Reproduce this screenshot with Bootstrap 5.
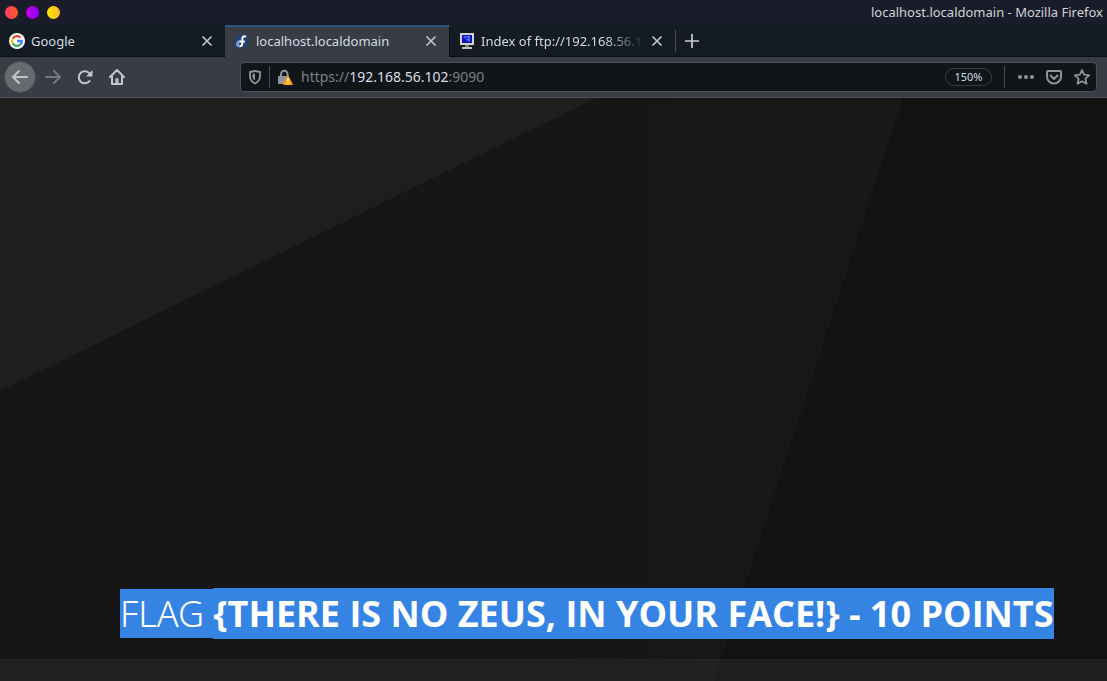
<!DOCTYPE html>
<html lang="en">
<head>
<meta charset="utf-8">
<meta name="viewport" content="width=device-width, initial-scale=1">
<title>localhost.localdomain - Mozilla Firefox</title>
<link href="https://cdn.jsdelivr.net/npm/bootstrap@5.3.0/dist/css/bootstrap.min.css" rel="stylesheet">
<style>
body{font-family:"Noto Sans",sans-serif;font-size:13px;line-height:20px;background:#171717;color:#d3dae3}
svg{display:block;flex:none}
button{background:none;border:0;padding:0;color:inherit}
.titlebar{height:24px;background:#1a1d29;color:#d0d3d9;padding:0 4px 0 5px}
.win-btn{width:13px;height:13px;border-radius:50%}
.win-close{background:linear-gradient(90deg,#ff4065,#ff5722)}
.win-min{background:linear-gradient(90deg,#cc00dd,#8800ff)}
.win-max{background:linear-gradient(90deg,#ffea00,#ffb62b)}
.tabstrip{height:33px;background:#141b22;border-bottom:1px solid #0b0f14;padding-top:1px}
.tab-item{flex:0 0 225px;min-width:0;gap:6px;padding:0 12px 0 9px;height:32px}
.tab-item.current{background:#383c44;border-top:2px solid #2c5582;border-right:1px solid #0b0f14;padding-bottom:2px}
.tab-item a{color:inherit;text-decoration:none;white-space:nowrap;overflow:hidden;min-width:0}
.fade-end{-webkit-mask-image:linear-gradient(90deg,#000 75%,transparent);mask-image:linear-gradient(90deg,#000 75%,transparent)}
.tool-row{height:41px;background:#383c44;border-bottom:1px solid #4b5058;padding:0 10px 1px 4px;color:#c0c6d0}
.back-btn{width:32px;height:32px;border-radius:50%;background:#686b6e;border:1px solid #4a4d51}
.history-tools{margin-left:-7px}
.urlbar{height:30px;background:#101518;border:1px solid #4b5058;border-radius:4px;color:#90949a;font-size:14px;padding:0 5px 0 7px;margin-left:115px;min-width:0}
.site-info{gap:7px}
.page-tools{gap:10px}
.vline{width:1px;height:22px;background:#484d53}
.url-field{position:relative;min-width:0}
.url-field input{width:100%;background:none;border:0;outline:0;padding:0;color:transparent}
.url-face{position:absolute;inset:0;pointer-events:none;color:#7c8188;white-space:nowrap}
.url-face b{font-weight:400;color:#d8dde5}
.zoom-pill{border:1px solid #383d43;border-radius:10px;width:47px;height:18px;font-size:11px;line-height:16px;color:#d3dae3}
.viewport-area{position:relative;overflow:hidden}
.backdrop{position:absolute;inset:0;width:100%;height:100%}
.flag-line{position:relative;margin:0 0 20px 120px;font-family:"Open Sans",sans-serif;font-size:36px;line-height:51px;color:#fff;white-space:nowrap}
.flag-line span,.flag-line strong{background:#3584e4}
.flag-line span{font-family:"Noto Sans",sans-serif;font-weight:300}
.flag-line strong{font-weight:700;padding:1px 0}
.foot-strip{position:relative;height:22px;background:rgba(255,255,255,.05)}
</style>
</head>
<body class="d-flex flex-column vh-100">
<header>
  <div class="titlebar d-flex align-items-center justify-content-between">
    <div class="d-flex gap-2">
      <button class="win-btn win-close" aria-label="Close"></button>
      <button class="win-btn win-min" aria-label="Minimize"></button>
      <button class="win-btn win-max" aria-label="Maximize"></button>
    </div>
    <span>localhost.localdomain - Mozilla Firefox</span>
  </div>

  <nav class="tabstrip d-flex" aria-label="Tabs">
    <div class="tab-item d-flex align-items-center">
      <svg width="16" height="16" viewBox="0 0 16 16"><circle cx="8" cy="8" r="8" fill="#fff"/><g fill="none" stroke-width="2.3"><path d="M11.6 4.6A4.9 4.9 0 0 0 3.8 5.5" stroke="#ea4335"/><path d="M3.8 5.5a4.9 4.9 0 0 0 0 5" stroke="#fbbc05"/><path d="M3.8 10.5a4.9 4.9 0 0 0 7.4 1.2" stroke="#34a853"/><path d="M11.2 11.7A4.7 4.7 0 0 0 12.8 8H8" stroke="#4285f4"/></g></svg>
      <a href="#" class="flex-grow-1">Google</a>
      <button aria-label="Close tab"><svg width="12" height="12" viewBox="0 0 12 12" fill="none" stroke="#c0c5cc" stroke-width="1.7"><path d="M1.5 1.5l9 9m0-9l-9 9"/></svg></button>
    </div>
    <div class="tab-item current d-flex align-items-center">
      <svg width="16" height="16" viewBox="0 0 16 16"><path d="M8 1a7 7 0 1 1 0 14H1V8a7 7 0 0 1 7-7z" fill="#294172"/><path d="M12 3.8C9.8 2.500 8.300 3.900 8.300 6v4.200c0 2.100-1.100 3-2.400 3-1.500 0-2.400-1-2.400-2.300 0-1.400 1.100-2.400 2.600-2.400h4.700" fill="none" stroke="#fff" stroke-width="1.900"/><path d="M5.600 8.500c-1.400.2-2.100 1.200-2.100 2.400 0 1.300.9 2.300 2.400 2.300" fill="none" stroke="#75a1d8" stroke-width="1.900"/></svg>
      <a href="#" class="flex-grow-1">localhost.localdomain</a>
      <button aria-label="Close tab"><svg width="12" height="12" viewBox="0 0 12 12" fill="none" stroke="#c0c5cc" stroke-width="1.7"><path d="M1.5 1.5l9 9m0-9l-9 9"/></svg></button>
    </div>
    <div class="tab-item d-flex align-items-center">
      <svg width="16" height="16" viewBox="0 0 16 16"><path d="M1 0h14v12H1z" fill="#d5d2c8"/><path d="M3 2h10v8H3z" fill="#0b15c8"/><path d="M4 3h7v6C8 8 6 6 4 3z" fill="#5670e8"/><path d="M6 3l4 3H7z" fill="#1020d8"/><path d="M6 12h4v2H6z" fill="#777a75"/><path d="M3 14h10v2H3z" fill="#c3c1b7"/></svg>
      <a href="#" class="flex-grow-1 fade-end">Index of ftp://192.168.56.102/</a>
      <button aria-label="Close tab"><svg width="12" height="12" viewBox="0 0 12 12" fill="none" stroke="#c0c5cc" stroke-width="1.7"><path d="M1.5 1.5l9 9m0-9l-9 9"/></svg></button>
    </div>
    <div class="d-flex align-items-center gap-2">
      <span class="vline"></span>
      <button aria-label="New tab"><svg width="16" height="16" viewBox="0 0 16 16" fill="none" stroke="#c8cdd5" stroke-width="1.7"><path d="M8 1v14M1 8h14"/></svg></button>
    </div>
  </nav>

  <div class="tool-row d-flex align-items-center">
    <div class="d-flex align-items-center gap-3">
      <button class="back-btn d-flex align-items-center justify-content-center" aria-label="Back"><svg width="16" height="16" viewBox="0 0 16 16" fill="none" stroke="currentColor" stroke-width="2" stroke-linecap="round" stroke-linejoin="round"><path d="M15 8H1.500M7 2L1 8l6 6"/></svg></button>
      <div class="history-tools d-flex gap-3">
        <button aria-label="Forward"><svg width="16" height="16" viewBox="0 0 16 16" fill="none" stroke="#73777f" stroke-width="2" stroke-linecap="round" stroke-linejoin="round"><path d="M1 8h13.500M9 2l6 6-6 6"/></svg></button>
        <button aria-label="Reload"><svg width="16" height="16" viewBox="0 0 16 16"><path d="M12.500 12A6 6 0 1 1 12.500 4.500" fill="none" stroke="currentColor" stroke-width="2" stroke-linecap="round"/><path d="M15.500 1v6.500H9z" fill="currentColor"/></svg></button>
        <button aria-label="Home"><svg width="16" height="16" viewBox="0 0 16 16" fill="none" stroke="currentColor" stroke-width="2" stroke-linecap="round" stroke-linejoin="round"><path d="M1 8l7-7 7 7M3 7v8h10V7"/><path d="M7.200 14v-4h1.600v4" stroke-width="1.500"/></svg></button>
      </div>
    </div>
    <div class="urlbar d-flex align-items-center flex-grow-1 gap-2">
      <div class="site-info d-flex align-items-center">
        <svg width="14" height="16" viewBox="0 0 14 16"><path d="M7 2L12 3v4c0 4-2 6-5 7.500C4 13 2 11 2 7V3z" fill="none" stroke="currentColor" stroke-width="1.800" stroke-linejoin="round"/><path d="M7 4.500v7C5 10 4.500 9 4.500 7V5z" fill="currentColor"/></svg>
        <span class="vline"></span>
        <svg width="16" height="16" viewBox="0 0 16 16"><path d="M4 8V5a3.300 3.300 0 0 1 6.600 0v3" fill="none" stroke="currentColor" stroke-width="2"/><rect x="1" y="7" width="9" height="8" rx="1" fill="currentColor"/><path d="M11 7L15.500 15.500h-9z" fill="#ffa40a" stroke="#ffa40a" stroke-linejoin="round"/><path d="M11 9.500v3m0 1v1.200" stroke="#fff" stroke-width="1.300"/></svg>
      </div>
      <div class="url-field flex-grow-1">
        <input type="text" aria-label="Address" value="">
        <div class="url-face">https://<b>192.168.56.102</b>:9090</div>
      </div>
      <button class="zoom-pill">150%</button>
      <span class="vline ms-1"></span>
      <div class="page-tools d-flex align-items-center ms-1">
        <button aria-label="Page actions"><svg width="18" height="16" viewBox="0 0 18 16" fill="currentColor"><circle cx="3" cy="8" r="2"/><circle cx="9" cy="8" r="2"/><circle cx="15" cy="8" r="2"/></svg></button>
        <button aria-label="Save to Pocket"><svg width="18" height="16" viewBox="0 0 18 16" fill="none" stroke="currentColor" stroke-width="2" stroke-linecap="round" stroke-linejoin="round"><path d="M3 2h12q1 0 1 1v4.500a7 7 0 0 1-14 0V3q0-1 1-1z"/><path d="M5.500 6.500L9 10l3.500-3.500"/></svg></button>
        <button aria-label="Bookmark"><svg width="18" height="16" viewBox="0 0 18 16" fill="none" stroke="currentColor" stroke-width="1.800" stroke-linejoin="round"><path d="M9 1l2.100 4.700 5.100.6-3.800 3.400 1.100 5.100L9 12.200l-4.500 2.600 1.100-5.100-3.800-3.400 5.100-.6z"/></svg></button>
      </div>
    </div>
  </div>
</header>

<main class="viewport-area flex-grow-1 d-flex flex-column justify-content-end">
  <svg class="backdrop" viewBox="0 0 1107 583" preserveAspectRatio="none" aria-hidden="true">
    <defs><linearGradient id="sheen" x1="0" x2="1"><stop offset=".5" stop-color="#161616"/><stop offset="1" stop-color="#191919"/></linearGradient></defs>
    <path d="M0 0h1107v583H0z" fill="url(#sheen)"/>
    <path d="M0 0h596L0 293z" fill="#1e1e1e"/>
    <path d="M903 0h204v583H714z" fill="#121212"/>
  </svg>
  <p class="flag-line"><span>FLAG </span><strong>{THERE IS NO ZEUS, IN YOUR FACE!} - 10 POINTS</strong></p>
  <div class="foot-strip"></div>
</main>
<script src="https://cdn.jsdelivr.net/npm/bootstrap@5.3.0/dist/js/bootstrap.bundle.min.js"></script>
</body>
</html>
